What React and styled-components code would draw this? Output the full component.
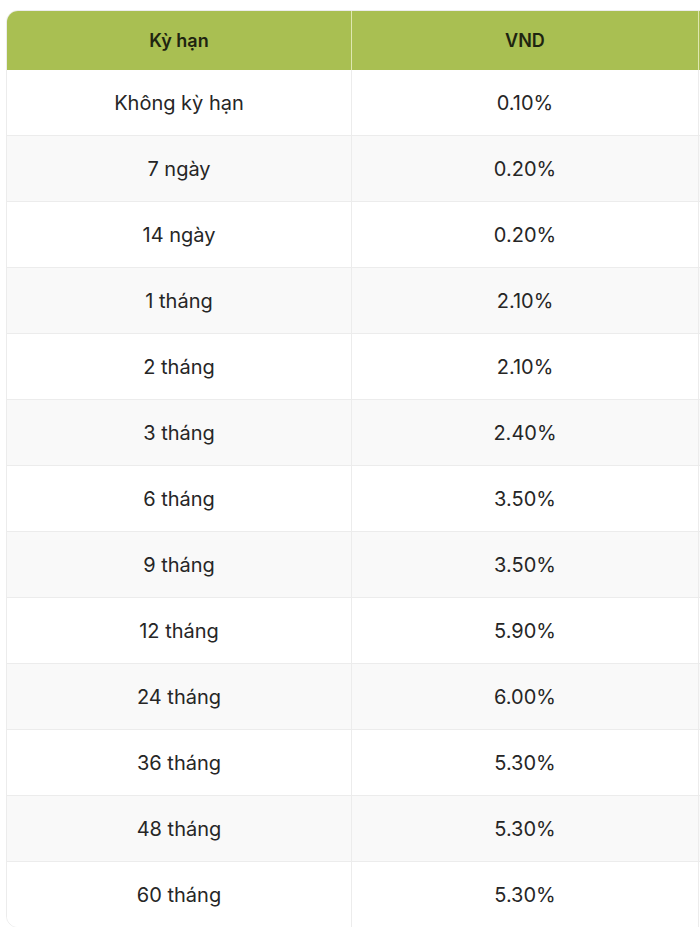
import React from "react";
import styled, { createGlobalStyle } from "styled-components";

const Global = createGlobalStyle`
  html, body { margin: 0; padding: 0; background: #ffffff; overflow: hidden; }
  body { font-family: Inter, "Noto Sans", "Liberation Sans", sans-serif; color: #222; }
`;

const Page = styled.div`
  width: 700px;
  height: 927px;
  overflow: hidden;
  padding: 10px 0 0 6px;
  box-sizing: border-box;
`;

const Table = styled.table`
  width: 1040px;
  border-collapse: separate;
  border-spacing: 0;
  table-layout: fixed;
  border: 1px solid #ececec;
  border-radius: 12px;
  overflow: hidden;
`;

const HeadCell = styled.th`
  background: #a9bf52;
  height: 59px;
  padding: 0;
  font-size: 18px;
  font-weight: 600;
  color: #1e2410;
  text-align: center;
  border-left: ${(p) => (p.$first ? "none" : "1px solid #dfe7b0")};
`;

const Row = styled.tr`
  background: ${(p) => (p.$alt ? "#f9f9f9" : "#ffffff")};
`;

const Cell = styled.td`
  height: 65px;
  padding: 0;
  font-size: 20px;
  font-weight: 400;
  color: #262626;
  text-align: center;
  border-top: ${(p) => (p.$top ? "none" : "1px solid #ececec")};
  border-left: ${(p) => (p.$first ? "none" : "1px solid #ececec")};
`;

const rows = [
  ["Không kỳ hạn", "0.10%"],
  ["7 ngày", "0.20%"],
  ["14 ngày", "0.20%"],
  ["1 tháng", "2.10%"],
  ["2 tháng", "2.10%"],
  ["3 tháng", "2.40%"],
  ["6 tháng", "3.50%"],
  ["9 tháng", "3.50%"],
  ["12 tháng", "5.90%"],
  ["24 tháng", "6.00%"],
  ["36 tháng", "5.30%"],
  ["48 tháng", "5.30%"],
  ["60 tháng", "5.30%"],
];

export default function App() {
  return (
    <Page>
      <Global />
      <Table>
        <colgroup>
          <col style={{ width: 344 }} />
          <col style={{ width: 347 }} />
          <col style={{ width: 347 }} />
        </colgroup>
        <thead>
          <tr>
            <HeadCell $first>Kỳ hạn</HeadCell>
            <HeadCell>VND</HeadCell>
            <HeadCell />
          </tr>
        </thead>
        <tbody>
          {rows.map(([term, rate], i) => (
            <Row key={term} $alt={i % 2 === 1}>
              <Cell $first $top={i === 0}>{term}</Cell>
              <Cell $top={i === 0}>{rate}</Cell>
              <Cell $top={i === 0} />
            </Row>
          ))}
        </tbody>
      </Table>
    </Page>
  );
}
